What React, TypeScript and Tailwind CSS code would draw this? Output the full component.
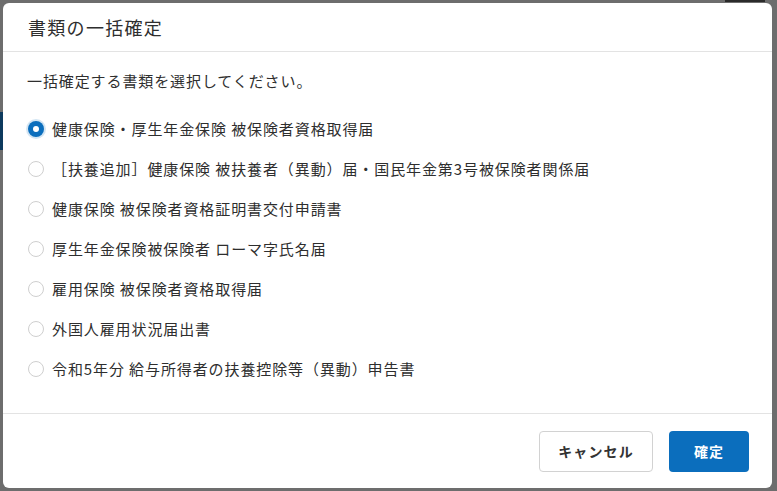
import React from 'react';

const documents = [
  '健康保険・厚生年金保険 被保険者資格取得届',
  '［扶養追加］健康保険 被扶養者（異動）届・国民年金第3号被保険者関係届',
  '健康保険 被保険者資格証明書交付申請書',
  '厚生年金保険被保険者 ローマ字氏名届',
  '雇用保険 被保険者資格取得届',
  '外国人雇用状況届出書',
  '令和5年分 給与所得者の扶養控除等（異動）申告書',
];

const Radio: React.FC<{ checked: boolean }> = ({ checked }) =>
  checked ? (
    <span className="w-4 h-4 rounded-full bg-[#0b6ebd] flex items-center justify-center shadow-[0_0_0_2px_rgba(11,110,189,0.18)] shrink-0">
      <span className="w-[6px] h-[6px] rounded-full bg-white" />
    </span>
  ) : (
    <span className="w-4 h-4 rounded-full border border-[#cfcfcf] bg-white shrink-0" />
  );

export default function App() {
  const selected = 0;

  return (
    <div
      className="relative w-[777px] h-[491px] overflow-hidden bg-[#6d6d6d]"
      style={{ fontFamily: '"Noto Sans CJK JP", "Noto Sans", sans-serif' }}
    >
      {/* dimmed page behind the dialog */}
      <div className="absolute left-0 top-[112px] w-[3px] h-[38px] bg-[#0d3a5e]" />
      <div className="absolute left-[725px] top-0 w-[40px] h-[2px] bg-[#2a2a2a]" />

      {/* Dialog */}
      <div className="absolute left-[3px] top-[3px] w-[769px] h-[485px] bg-white rounded-[6px] flex flex-col text-[#2e2e2e]">
        <div className="h-[49px] px-[25px] flex items-center border-b border-[#e3e3e3]">
          <h2 className="text-[18px] tracking-[1.3px] leading-none">書類の一括確定</h2>
        </div>

        <div className="flex-1 px-[24px] pt-[17px]">
          <p className="text-[15px] leading-[24px] tracking-[0.9px]">一括確定する書類を選択してください。</p>
          <div className="mt-[16px] flex flex-col">
            {documents.map((doc, i) => (
              <label key={doc} className="h-[40px] flex items-center gap-[8px] pl-[1px] text-[15px] tracking-[0.9px] cursor-pointer">
                <Radio checked={i === selected} />
                <span>{doc}</span>
              </label>
            ))}
          </div>
        </div>

        <div className="h-[75px] border-t border-[#e3e3e3] flex items-center justify-end gap-4 pr-[23px]">
          <button className="w-[114px] h-[41px] rounded-[4px] border border-[#d2d2d2] bg-white text-[14px] font-bold tracking-[0.08em] text-[#333]">
            キャンセル
          </button>
          <button className="w-[80px] h-[41px] rounded-[4px] bg-[#0b6ebd] text-[14px] font-bold tracking-[0.08em] text-white">
            確定
          </button>
        </div>
      </div>
    </div>
  );
}
